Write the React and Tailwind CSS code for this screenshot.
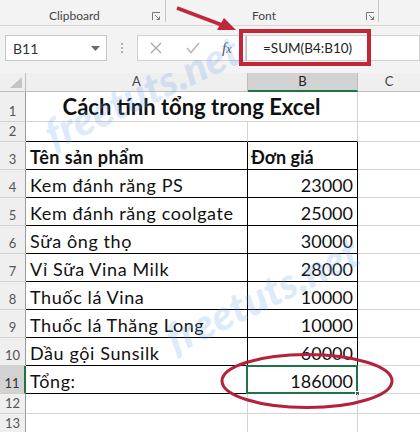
import React from "react";

const rows = [
  { n: 1, h: 30, title: true },
  { n: 2, h: 20, top: true },
  { n: 3, h: 28, a: "Tên sản phẩm", b: "Đơn giá", head: true },
  { n: 4, h: 28, a: "Kem đánh răng PS", b: "23000" },
  { n: 5, h: 28, a: "Kem đánh răng coolgate", b: "25000" },
  { n: 6, h: 28, a: "Sữa ông thọ", b: "30000" },
  { n: 7, h: 28, a: "Vỉ Sữa Vina Milk", b: "28000" },
  { n: 8, h: 28, a: "Thuốc lá Vina", b: "10000" },
  { n: 9, h: 28, a: "Thuốc lá Thăng Long", b: "10000" },
  { n: 10, h: 28, a: "Dầu gội Sunsilk", b: "60000" },
  { n: 11, h: 28, a: "Tổng:", b: "186000", sel: true },
  { n: 12, h: 20 },
  { n: 13, h: 20 },
];

const Launcher = () => (
  <svg width="9" height="9" viewBox="0 0 9 9" className="shrink-0">
    <path d="M0.5 8 V0.5 H8" fill="none" stroke="#777" strokeWidth="1" />
    <path d="M3 3 L7.5 7.5 M4.5 7.5 H7.5 V4.5" fill="none" stroke="#777" strokeWidth="1" />
  </svg>
);

const GridRow = ({ r }) => {
  const table = r.a !== undefined;
  const hdr = r.sel
    ? "bg-[#d2d2d2] text-[#333] border-r-2 border-r-[#217346]"
    : "bg-[#efefef] text-[#555] border-r border-r-[#9b9b9b]";
  const line = table || r.top ? "border-black" : "border-[#d4d4d4]";
  return (
    <div className="flex" style={{ height: r.h }}>
      <div
        className={`w-[26px] shrink-0 flex items-end justify-center pb-[2px] text-[13px] leading-[16px] border-b border-b-[#d0d0d0] ${hdr}`}
      >
        {r.n}
      </div>
      {r.title ? (
        <div className="w-[332px] shrink-0 border-r border-b border-[#d4d4d4] flex items-end justify-center pb-[1px] text-[22px] leading-[27px] font-bold text-[#111]">
          Cách tính tổng trong Excel
        </div>
      ) : (
        <>
          <div
            className={`w-[222px] shrink-0 border-r border-b ${line} ${
              table ? "" : "border-r-[#d4d4d4]"
            } flex items-end pl-[4px] pb-[1px] text-[18px] leading-[22px] text-[#111] ${
              r.head ? "font-bold tracking-[0.4px]" : "tracking-[0.6px]"
            }`}
          >
            {r.a}
          </div>
          <div
            className={`relative w-[110px] shrink-0 border-r border-b ${line} ${
              table ? "" : "border-r-[#d4d4d4]"
            } flex items-end pb-[1px] text-[18px] leading-[22px] text-[#111] ${
              r.head ? "font-bold justify-start pl-[3px]" : "justify-end pr-[4px]"
            }`}
          >
            {r.b}
            {r.sel && (
              <>
                <div className="absolute left-[-2px] top-[-1px] right-[-1px] bottom-[-1px] border-2 border-[#217346]" />
                <div className="absolute right-[-3px] bottom-[-3px] w-[5px] h-[5px] bg-[#217346] border border-white" />
              </>
            )}
          </div>
        </>
      )}
      <div className="flex-1 border-b border-[#d4d4d4]" />
    </div>
  );
};

export default function App() {
  return (
    <div className="relative w-[420px] h-[432px] overflow-hidden bg-white font-['Lato',sans-serif]">
      {/* ribbon group labels */}
      <div className="flex h-[26px] bg-[#f3f3f3] border-b border-[#d6d6d6] text-[12px] text-[#444]">
        <div className="w-[165px] flex items-center pt-[6px]">
          <span className="ml-[49px]">Clipboard</span>
          <span className="ml-auto mr-[4px] mt-[2px]">
            <Launcher />
          </span>
        </div>
        <div className="w-px h-[22px] bg-[#c8c8c8]" />
        <div className="w-[212px] flex items-center pt-[6px]">
          <span className="ml-[86px]">Font</span>
          <span className="ml-auto mr-[3px] mt-[2px]">
            <Launcher />
          </span>
        </div>
        <div className="w-px h-[22px] bg-[#c8c8c8]" />
      </div>

      {/* formula bar */}
      <div className="flex items-start h-[47px] bg-[#f3f3f3] pt-[9px]">
        <div className="ml-[5px] w-[102px] h-[26px] bg-white border border-[#c6c6c6] flex items-center pl-[7px] pr-[6px] text-[14px] text-[#333]">
          B11
          <svg width="9" height="5" viewBox="0 0 9 5" className="ml-auto">
            <path d="M0 0 H9 L4.5 5 Z" fill="#6a6a6a" />
          </svg>
        </div>
        <div className="w-[30px] h-[26px] flex flex-col items-center justify-center gap-[2px]">
          <span className="w-[2px] h-[2px] bg-[#b0b0b0]" />
          <span className="w-[2px] h-[2px] bg-[#b0b0b0]" />
          <span className="w-[2px] h-[2px] bg-[#b0b0b0]" />
        </div>
        <div className="w-[109px] h-[26px] bg-white border border-[#d0d0d0] flex items-center">
          <svg width="12" height="12" viewBox="0 0 12 12" className="ml-[12px]">
            <path d="M1 1 L11 11 M11 1 L1 11" stroke="#a8a8a8" strokeWidth="1.3" />
          </svg>
          <svg width="14" height="12" viewBox="0 0 14 12" className="ml-[24px]">
            <path d="M1 6 L5 10.5 L13 1" fill="none" stroke="#b8b8b8" strokeWidth="1.6" />
          </svg>
          <span className="ml-[22px] font-['Liberation_Serif',serif] italic text-[15px] text-[#555]">
            f<span className="text-[12px]">x</span>
          </span>
        </div>
        <div className="flex-1 h-[26px] bg-white border border-[#d0d0d0] border-l-[#c0c0c0] flex items-center pl-[16px] text-[13.5px] text-[#222]">
          =SUM(B4:B10)
        </div>
      </div>

      {/* column headers */}
      <div className="flex h-[19px] text-[13px] text-[#444]">
        <div className="w-[26px] bg-[#efefef] border-r border-b border-[#bdbdbd] relative">
          <svg width="26" height="18" viewBox="0 0 26 18" className="absolute inset-0">
            <path d="M22 4 V15 H10 Z" fill="#c4c4c4" />
          </svg>
        </div>
        <div className="w-[222px] bg-[#efefef] border-r border-b border-[#bdbdbd] flex items-center justify-center">
          A
        </div>
        <div className="w-[110px] bg-[#d2d2d2] border-r border-r-[#bdbdbd] border-b-2 border-b-[#217346] flex items-center justify-center text-[#222]">
          B
        </div>
        <div className="flex-1 bg-[#efefef] border-b border-[#bdbdbd] flex items-center justify-center">
          C
        </div>
      </div>

      {/* grid */}
      <div>
        {rows.map((r) => (
          <GridRow key={r.n} r={r} />
        ))}
      </div>

      {/* watermark */}
      <div className="pointer-events-none absolute left-[142px] top-[92px] -translate-x-1/2 -translate-y-1/2 rotate-[-25deg] text-[42px] font-black italic text-[rgba(100,160,235,0.22)] whitespace-nowrap">
        freetuts.net
      </div>
      <div className="pointer-events-none absolute left-[262px] top-[295px] -translate-x-1/2 -translate-y-1/2 rotate-[-26deg] text-[42px] font-black italic text-[rgba(100,160,235,0.22)] whitespace-nowrap">
        freetuts.net
      </div>

      {/* annotations */}
      <div className="pointer-events-none absolute left-[239px] top-[29px] w-[132px] h-[37px] border-[4px] border-[#c0283a]" />
      <svg className="pointer-events-none absolute left-0 top-0" width="420" height="432">
        <line x1="177" y1="8" x2="222" y2="25" stroke="#c0283a" strokeWidth="3.5" />
        <path d="M236 30 L217 30 L224 18 Z" fill="#c0283a" />
        <ellipse cx="307" cy="381" rx="85" ry="26.5" fill="none" stroke="#b5203a" strokeWidth="3" />
      </svg>
    </div>
  );
}
